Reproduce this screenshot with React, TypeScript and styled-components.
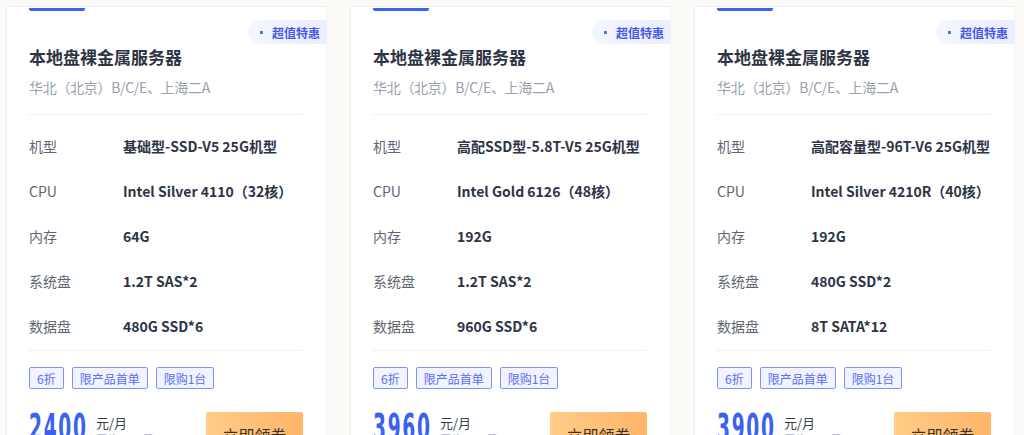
import React from 'react';
import styled, { createGlobalStyle } from 'styled-components';

const GlobalStyle = createGlobalStyle`
  html, body {
    margin: 0;
    padding: 0;
    background: #fcfaf6;
    overflow: hidden;
  }
  body {
    font-family: 'Noto Sans CJK SC', 'Noto Sans', sans-serif;
  }
`;

interface Spec {
  label: string;
  value: string;
}

interface Plan {
  price: string;
  origin: string;
  labelWidth: number;
  specs: Spec[];
}

const plans: Plan[] = [
  {
    price: '2400',
    origin: '原价4000元',
    labelWidth: 94,
    specs: [
      { label: '机型', value: '基础型-SSD-V5 25G机型' },
      { label: 'CPU', value: 'Intel Silver 4110（32核）' },
      { label: '内存', value: '64G' },
      { label: '系统盘', value: '1.2T SAS*2' },
      { label: '数据盘', value: '480G SSD*6' },
    ],
  },
  {
    price: '3960',
    origin: '原价6600元',
    labelWidth: 84,
    specs: [
      { label: '机型', value: '高配SSD型-5.8T-V5 25G机型' },
      { label: 'CPU', value: 'Intel Gold 6126（48核）' },
      { label: '内存', value: '192G' },
      { label: '系统盘', value: '1.2T SAS*2' },
      { label: '数据盘', value: '960G SSD*6' },
    ],
  },
  {
    price: '3900',
    origin: '原价6500元',
    labelWidth: 94,
    specs: [
      { label: '机型', value: '高配容量型-96T-V6 25G机型' },
      { label: 'CPU', value: 'Intel Silver 4210R（40核）' },
      { label: '内存', value: '192G' },
      { label: '系统盘', value: '480G SSD*2' },
      { label: '数据盘', value: '8T SATA*12' },
    ],
  },
];

const tags = ['6折', '限产品首单', '限购1台'];

const Page = styled.div`
  display: flex;
  gap: 23px;
  padding: 6px 0 0 6px;
  height: 435px;
  box-sizing: border-box;
`;

const Card = styled.div`
  position: relative;
  flex: 0 0 321px;
  height: 520px;
  box-sizing: border-box;
  border: 1px solid #eceff6;
  background: #ffffff;
  padding: 0 23px 0 22px;
`;

const TopBar = styled.div`
  width: 56px;
  height: 3px;
  margin-top: 1px;
  background: #3b62f4;
  border-radius: 0 0 2px 2px;
`;

const Badge = styled.div`
  position: absolute;
  top: 13px;
  right: 0;
  height: 24px;
  width: 79px;
  display: flex;
  align-items: center;
  gap: 9px;
  padding-left: 13px;
  box-sizing: border-box;
  background: linear-gradient(90deg, #f5f7ff, #e9edfd);
  clip-path: polygon(7px 0, 100% 0, 100% 100%, 7px 100%, 0 50%);
  color: #4659e6;
  font-size: 12px;
  font-weight: 700;
`;

const Dot = styled.span`
  width: 3px;
  height: 3px;
  background: #5b6cf0;
`;

const Title = styled.div`
  margin-top: 34px;
  font-size: 17px;
  line-height: 24px;
  font-weight: 700;
  color: #2e3446;
`;

const Region = styled.div`
  margin-top: 8px;
  font-size: 14px;
  line-height: 20px;
  color: #9aa0ae;
  letter-spacing: -0.3px;
`;

const Divider = styled.div<{ $gap: number }>`
  height: 1px;
  background: #eef0f5;
  margin-top: ${p => p.$gap}px;
`;

const SpecList = styled.div`
  padding-top: 8px;
`;

const SpecRow = styled.div<{ $labelWidth: number }>`
  display: grid;
  grid-template-columns: ${p => p.$labelWidth}px 1fr;
  align-items: center;
  height: 45px;
  font-size: 14px;
`;

const SpecLabel = styled.span`
  color: #5f6574;
`;

const SpecValue = styled.span`
  color: #2e3446;
  font-weight: 700;
  white-space: nowrap;
`;

const TagRow = styled.div`
  display: flex;
  gap: 8px;
  margin-top: 16px;
`;

const Tag = styled.span`
  height: 22px;
  padding: 0 7px;
  display: flex;
  align-items: center;
  box-sizing: border-box;
  border: 1px solid #8193f5;
  border-radius: 2px;
  background: #f1f4ff;
  color: #5b6ef0;
  font-size: 12px;
`;

const PriceRow = styled.div`
  display: flex;
  align-items: flex-start;
  margin-top: 22px;
`;

const Amount = styled.span`
  display: inline-block;
  width: 58px;
  font-family: 'DejaVu Sans Condensed', 'DejaVu Sans', sans-serif;
  font-size: 37px;
  font-weight: 700;
  line-height: 34px;
  color: #3a62f0;
  transform: scaleX(0.56);
  transform-origin: left top;
  letter-spacing: 3px;
`;

const Unit = styled.div`
  display: flex;
  flex-direction: column;
  margin-left: 9px;
  margin-top: 4px;
`;

const UnitText = styled.span`
  font-size: 13px;
  line-height: 16px;
  color: #3a3f4c;
`;

const Origin = styled.span`
  font-size: 11px;
  line-height: 14px;
  color: #b0b4bf;
  text-decoration: line-through;
`;

const Button = styled.button`
  margin-left: auto;
  margin-top: 1px;
  width: 97px;
  height: 36px;
  border: none;
  border-radius: 2px;
  background: linear-gradient(90deg, #ffcc87, #ffb56a);
  color: #3a3328;
  font-family: inherit;
  font-size: 16px;
  padding-top: 10px;
  cursor: pointer;
`;

const PlanCard = ({ plan }: { plan: Plan }) => (
  <Card>
    <TopBar />
    <Badge>
      <Dot />
      超值特惠
    </Badge>
    <Title>本地盘裸金属服务器</Title>
    <Region>华北（北京）B/C/E、上海二A</Region>
    <Divider $gap={17} />
    <SpecList>
      {plan.specs.map(s => (
        <SpecRow key={s.label} $labelWidth={plan.labelWidth}>
          <SpecLabel>{s.label}</SpecLabel>
          <SpecValue>{s.value}</SpecValue>
        </SpecRow>
      ))}
    </SpecList>
    <Divider $gap={2} />
    <TagRow>
      {tags.map(t => (
        <Tag key={t}>{t}</Tag>
      ))}
    </TagRow>
    <PriceRow>
      <Amount>{plan.price}</Amount>
      <Unit>
        <UnitText>元/月</UnitText>
        <Origin>{plan.origin}</Origin>
      </Unit>
      <Button>立即领券</Button>
    </PriceRow>
  </Card>
);

export default function App() {
  return (
    <>
      <GlobalStyle />
      <Page>
        {plans.map(p => (
          <PlanCard key={p.price} plan={p} />
        ))}
      </Page>
    </>
  );
}
